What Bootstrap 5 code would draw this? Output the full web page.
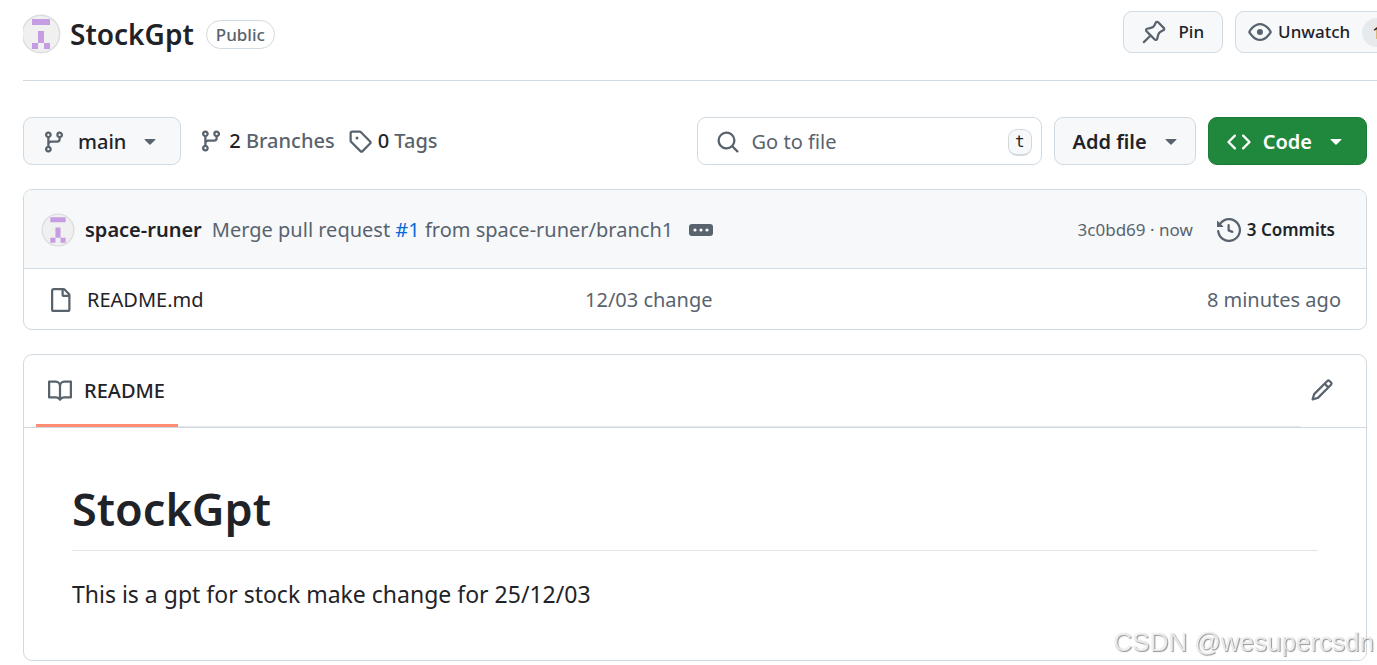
<!DOCTYPE html>
<html lang="en">
<head>
<meta charset="utf-8">
<meta name="viewport" content="width=device-width, initial-scale=1">
<title>StockGpt</title>
<link href="https://cdn.jsdelivr.net/npm/bootstrap@5.3.0/dist/css/bootstrap.min.css" rel="stylesheet">
<style>
  :root { --line: #d1d9e0; --muted: #59636e; --ink: #1f2328; --soft: #f6f8fa; }
  body { font-family: "Noto Sans", "Open Sans", sans-serif; font-size: 20px; line-height: 30px; color: var(--ink); background: #fff; overflow-x: hidden; }
  a { color: inherit; text-decoration: none; }
  .ico { width: 24px; height: 24px; fill: var(--muted); flex: none; }
  .muted { color: var(--muted); }
  .accent { color: #0969da; }
  .semi { font-weight: 600; }
  .medium { font-weight: 500; }
  .gap-icon { gap: 6px; }
  .gap-wide { gap: 12px; }
  .page { padding: 0 10px 0 23px; }
  .repo-head { height: 81px; padding-bottom: 12px; margin-right: -10px; border-bottom: 1px solid var(--line); overflow: hidden; }
  .head-actions { gap: 12px; margin: 0 -28px 4px auto; }
  .avatar-lg { width: 40px; height: 40px; margin-left: -2px; }
  .avatar-sm { width: 34px; height: 34px; }
  .repo-name { font-size: 28px; line-height: 36px; margin-left: 9px; }
  .pill { font-size: 17px; line-height: 27px; border: 1px solid var(--line); border-radius: 15px; padding: 0 9px; margin-left: 12px; }
  .btn-soft { --bs-btn-color: var(--ink); --bs-btn-bg: var(--soft); --bs-btn-border-color: var(--line); --bs-btn-hover-bg: #eff2f5; --bs-btn-hover-border-color: var(--line); --bs-btn-border-radius: 9px; font-size: 20px; line-height: 30px; padding: 0 18px; display: flex; align-items: center; gap: 12px; flex: none; }
  .btn-green { --bs-btn-color: #fff; --bs-btn-bg: #1f883d; --bs-btn-border-color: #1c7a37; --bs-btn-hover-color: #fff; --bs-btn-hover-bg: #1c8139; }
  .btn-green .ico { fill: #fff; }
  .head-btn { height: 42px; font-size: 17px; }
  .watch-btn { padding: 0 12px; gap: 6px; }
  .tool { height: 48px; padding-top: 2px; }
  .add-btn { padding-right: 12px; }
  .count { background: #e7eaed; border-radius: 15px; line-height: 29px; padding: 0 10px; margin-left: 6px; }
  .toolbar { margin-top: 36px; }
  .refs { gap: 13px; margin-left: 18px; }
  .search-box { width: 345px; border: 1px solid var(--line); border-radius: 9px; padding: 2px 9px 0 18px; gap: 12px; }
  .search-box input { font: inherit; color: var(--ink); border: 0; outline: 0; min-width: 0; padding: 0; background: transparent; }
  .search-box input::placeholder { color: var(--muted); opacity: 1; }
  .key { font: 16px/24px "DejaVu Sans Mono", monospace; color: var(--ink); background: var(--soft); border: 1px solid var(--line); border-bottom-width: 2px; border-radius: 9px; padding: 0 6px; }
  .panel { border: 1px solid var(--line); border-radius: 9px; margin-top: 24px; }
  .commit { height: 79px; padding: 1px 31px 0 17px; gap: 10px; background: var(--soft); border-bottom: 1px solid var(--line); border-radius: 8px 8px 0 0; }
  .commit-meta { font-size: 17px; gap: 24px; }
  .dots { width: 24px; height: 12px; border: 0; padding: 0; border-radius: 3px; background: var(--muted); display: flex; margin-left: 6px; }
  .dots svg { width: 24px; height: 12px; fill: #fff; }
  .files { width: 100%; table-layout: fixed; }
  .files td { height: 60px; padding: 1px 25px 0 0; vertical-align: middle; }
  .files td:first-child { width: 561px; padding-left: 24px; }
  .file-name { gap: 15px; }
  .tabs { height: 73px; padding: 0 32px 0 12px; border-bottom: 1px solid var(--line); }
  .tabline { border-bottom: 1px solid #e3e8ec; margin-right: 9px; }
  .tab-on { padding: 2px 13px 0 12px; border-bottom: 3px solid #fd8c73; margin-bottom: -1px; gap: 12px; }
  .edit-btn { padding: 0 0 2px; border: 0; display: flex; align-items: center; }
  .article { padding: 49px 48px 48px; }
  .article h1 { font-size: 45px; line-height: 64px; padding-bottom: 9px; margin: 0 0 25px; border-bottom: 1px solid #dfe4e9; }
  .article p { font-size: 23px; line-height: 36px; margin: 0; }
  .watermark { position: fixed; right: 3px; bottom: 8px; font: 26px/30px "Liberation Sans", sans-serif; color: rgba(255,255,255,.8); text-shadow: 1px 1px 1px rgba(0,0,0,.4), 0 0 1px rgba(0,0,0,.25); pointer-events: none; }
</style>
</head>
<body>
<svg class="d-none" aria-hidden="true">
  <symbol id="avatar" viewBox="0 0 40 40"><circle cx="20" cy="20" r="18.7" fill="#f0f0f0" stroke="#dcdddf" stroke-width="1.5"/><path fill="#c69ce2" d="M11 5h18v6H11zM17 17h6v12h-6zM11 29h6v6h-6zM23 29h6v6h-6z"/></symbol>
  <symbol id="branch" viewBox="0 0 16 16"><path d="M9.5 3.25a2.25 2.25 0 1 1 3 2.122V6A2.5 2.5 0 0 1 10 8.5H6a1 1 0 0 0-1 1v1.128a2.251 2.251 0 1 1-1.5 0V5.372a2.25 2.25 0 1 1 1.5 0v1.836A2.493 2.493 0 0 1 6 7h4a1 1 0 0 0 1-1v-.628A2.25 2.25 0 0 1 9.5 3.25Zm-6 0a.75.75 0 1 0 1.5 0 .75.75 0 0 0-1.5 0Zm8.25-.75a.75.75 0 1 0 0 1.5.75.75 0 0 0 0-1.5ZM4.25 12a.75.75 0 1 0 0 1.5.75.75 0 0 0 0-1.5Z"/></symbol>
  <symbol id="tag" viewBox="0 0 16 16"><path d="M1 7.775V2.75C1 1.784 1.784 1 2.75 1h5.025c.464 0 .91.184 1.238.513l6.25 6.25a1.75 1.75 0 0 1 0 2.474l-5.026 5.026a1.75 1.75 0 0 1-2.474 0l-6.25-6.25A1.752 1.752 0 0 1 1 7.775Zm1.5 0c0 .066.026.13.073.177l6.25 6.25a.25.25 0 0 0 .354 0l5.025-5.025a.25.25 0 0 0 0-.354l-6.25-6.25a.25.25 0 0 0-.177-.073H2.75a.25.25 0 0 0-.25.25ZM6 5a1 1 0 1 1 0 2 1 1 0 0 1 0-2Z"/></symbol>
  <symbol id="search" viewBox="0 0 16 16"><path d="M10.68 11.74a6 6 0 0 1-7.922-8.982 6 6 0 0 1 8.982 7.922l3.04 3.04a.749.749 0 0 1-.326 1.275.749.749 0 0 1-.734-.215ZM11.5 7a4.499 4.499 0 1 0-8.997 0A4.499 4.499 0 0 0 11.5 7Z"/></symbol>
  <symbol id="code" viewBox="0 0 16 16"><path d="m11.28 3.22 4.25 4.25a.75.75 0 0 1 0 1.06l-4.25 4.25a.749.749 0 0 1-1.275-.326.749.749 0 0 1 .215-.734L13.94 8l-3.72-3.72a.749.749 0 0 1 .326-1.275.749.749 0 0 1 .734.215Zm-6.56 0a.751.751 0 0 1 1.042.018.751.751 0 0 1 .018 1.042L2.06 8l3.72 3.72a.749.749 0 0 1-.326 1.275.749.749 0 0 1-.734-.215L.47 8.53a.75.75 0 0 1 0-1.06Z"/></symbol>
  <symbol id="caret" viewBox="0 0 16 16"><path d="m4.427 6.427 3.396 3.396a.25.25 0 0 0 .354 0l3.396-3.396A.25.25 0 0 0 11.396 6H4.604a.25.25 0 0 0-.177.427Z"/></symbol>
  <symbol id="file" viewBox="0 0 16 16"><path d="M2 1.75C2 .784 2.784 0 3.75 0h6.586c.464 0 .909.184 1.237.513l2.914 2.914c.329.328.513.773.513 1.237v9.586A1.75 1.75 0 0 1 13.25 16h-9.5A1.75 1.75 0 0 1 2 14.25Zm1.75-.25a.25.25 0 0 0-.25.25v12.5c0 .138.112.25.25.25h9.5a.25.25 0 0 0 .25-.25V6h-2.75A1.75 1.75 0 0 1 9 4.25V1.5Zm6.75.062V4.25c0 .138.112.25.25.25h2.688l-.011-.013-2.914-2.914-.013-.011Z"/></symbol>
  <symbol id="history" viewBox="0 0 16 16"><path d="m.427 1.927 1.215 1.215a8.002 8.002 0 1 1-1.6 5.685.75.75 0 1 1 1.493-.154 6.5 6.5 0 1 0 1.18-4.458l1.358 1.358A.25.25 0 0 1 3.896 6H.25A.25.25 0 0 1 0 5.75V2.104a.25.25 0 0 1 .427-.177ZM7.75 4a.75.75 0 0 1 .75.75v2.992l2.028.812a.75.75 0 0 1-.557 1.392l-2.5-1A.751.751 0 0 1 7 8.25v-3.5A.75.75 0 0 1 7.75 4Z"/></symbol>
  <symbol id="book" viewBox="0 0 16 16"><path d="M0 1.75A.75.75 0 0 1 .75 1h4.253c1.227 0 2.317.59 3 1.501A3.743 3.743 0 0 1 11.006 1h4.245a.75.75 0 0 1 .75.75v10.5a.75.75 0 0 1-.75.75h-4.507a2.25 2.25 0 0 0-1.591.659l-.622.621a.75.75 0 0 1-1.06 0l-.622-.621A2.25 2.25 0 0 0 5.258 13H.75a.75.75 0 0 1-.75-.75Zm7.251 10.324.004-5.073-.002-2.253A2.25 2.25 0 0 0 5.003 2.5H1.5v9h3.757a3.75 3.75 0 0 1 1.994.574ZM8.755 4.75l-.004 7.322a3.752 3.752 0 0 1 1.992-.572H14.5v-9h-3.495a2.25 2.25 0 0 0-2.25 2.25Z"/></symbol>
  <symbol id="pencil" viewBox="0 0 16 16"><path d="M11.013 1.427a1.75 1.75 0 0 1 2.474 0l1.086 1.086a1.75 1.75 0 0 1 0 2.474l-8.61 8.61c-.21.21-.47.364-.756.445l-3.251.93a.75.75 0 0 1-.927-.928l.929-3.25c.081-.286.235-.547.445-.758l8.61-8.61Zm.176 4.823L9.75 4.81l-6.286 6.287a.253.253 0 0 0-.064.108l-.558 1.953 1.953-.558a.253.253 0 0 0 .108-.064Zm1.238-3.763a.25.25 0 0 0-.354 0L10.811 3.75l1.439 1.44 1.263-1.263a.25.25 0 0 0 0-.354Z"/></symbol>
  <symbol id="eye" viewBox="0 0 16 16"><path d="M8 2c1.981 0 3.671.992 4.933 2.078 1.27 1.091 2.187 2.345 2.637 3.023a1.62 1.62 0 0 1 0 1.798c-.45.678-1.367 1.932-2.637 3.023C11.67 13.008 9.981 14 8 14c-1.981 0-3.671-.992-4.933-2.078C1.797 10.83.88 9.576.43 8.898a1.62 1.62 0 0 1 0-1.798c.45-.677 1.367-1.931 2.637-3.022C4.33 2.992 6.019 2 8 2ZM1.679 7.932a.12.12 0 0 0 0 .136c.411.622 1.241 1.75 2.366 2.717C5.176 11.758 6.527 12.5 8 12.5c1.473 0 2.825-.742 3.955-1.715 1.124-.967 1.954-2.096 2.366-2.717a.12.12 0 0 0 0-.136c-.412-.621-1.242-1.75-2.366-2.717C10.824 4.242 9.473 3.5 8 3.5c-1.473 0-2.825.742-3.955 1.715-1.124.967-1.954 2.096-2.366 2.717ZM8 10a2 2 0 1 1-.001-3.999A2 2 0 0 1 8 10Z"/></symbol>
  <symbol id="pin" viewBox="0 0 16 16"><path d="m11.294.984 3.722 3.722a1.75 1.75 0 0 1-.504 2.826l-1.327.613a3.089 3.089 0 0 0-1.707 2.084l-.584 2.454c-.317 1.332-1.972 1.8-2.94.832L5.75 11.311 1.78 15.28a.749.749 0 1 1-1.06-1.06l3.969-3.97-2.204-2.204c-.968-.968-.5-2.623.832-2.94l2.454-.584a3.08 3.08 0 0 0 2.084-1.707l.613-1.327a1.75 1.75 0 0 1 2.826-.504ZM6.283 9.723l2.732 2.731a.25.25 0 0 0 .42-.119l.584-2.454a4.586 4.586 0 0 1 2.537-3.098l1.328-.613a.25.25 0 0 0 .072-.404l-3.722-3.722a.25.25 0 0 0-.404.072l-.613 1.328a4.584 4.584 0 0 1-3.098 2.537l-2.454.584a.25.25 0 0 0-.119.42l2.731 2.732Z"/></symbol>
</svg>

<div class="page">
  <header class="repo-head d-flex align-items-center">
    <svg class="avatar-lg flex-shrink-0"><use href="#avatar"/></svg>
    <a href="#" class="repo-name semi">StockGpt</a>
    <span class="pill medium muted">Public</span>
    <div class="head-actions d-flex flex-shrink-0">
      <button type="button" class="btn btn-soft head-btn medium"><svg class="ico"><use href="#pin"/></svg><span>Pin</span></button>
      <button type="button" class="btn btn-soft head-btn watch-btn medium"><svg class="ico"><use href="#eye"/></svg><span>Unwatch</span><span class="count">1</span></button>
    </div>
  </header>

  <div class="toolbar d-flex align-items-center">
    <button type="button" class="btn btn-soft tool medium"><svg class="ico"><use href="#branch"/></svg><span>main</span><svg class="ico"><use href="#caret"/></svg></button>
    <nav class="refs d-flex medium" aria-label="Branches and tags">
      <a href="#" class="gap-icon d-flex align-items-center"><svg class="ico"><use href="#branch"/></svg><span>2 <span class="muted">Branches</span></span></a>
      <a href="#" class="gap-icon d-flex align-items-center"><svg class="ico"><use href="#tag"/></svg><span>0 <span class="muted">Tags</span></span></a>
    </nav>
    <div class="gap-wide d-flex ms-auto">
      <label class="search-box tool d-flex align-items-center"><svg class="ico"><use href="#search"/></svg><input type="text" class="flex-grow-1" placeholder="Go to file" aria-label="Go to file"><kbd class="key">t</kbd></label>
      <button type="button" class="btn btn-soft tool add-btn semi"><span>Add file</span><svg class="ico"><use href="#caret"/></svg></button>
      <button type="button" class="btn btn-soft btn-green tool semi"><svg class="ico"><use href="#code"/></svg><span>Code</span><svg class="ico"><use href="#caret"/></svg></button>
    </div>
  </div>

  <section class="panel">
    <div class="commit d-flex align-items-center">
      <svg class="avatar-sm flex-shrink-0"><use href="#avatar"/></svg>
      <a href="#" class="semi">space-runer</a>
      <span class="muted">Merge pull request <a href="#" class="accent">#1</a> from space-runer/branch1</span>
      <button type="button" class="dots" aria-label="Show details"><svg viewBox="0 0 24 12"><circle cx="6" cy="6" r="1.6"/><circle cx="12" cy="6" r="1.6"/><circle cx="18" cy="6" r="1.6"/></svg></button>
      <div class="commit-meta d-flex align-items-center ms-auto">
        <span class="muted">3c0bd69 · now</span>
        <a href="#" class="gap-icon semi d-flex align-items-center"><svg class="ico"><use href="#history"/></svg>3 Commits</a>
      </div>
    </div>
    <table class="files">
      <tbody><tr>
        <td><a href="#" class="file-name d-flex align-items-center"><svg class="ico"><use href="#file"/></svg>README.md</a></td>
        <td class="muted">12/03 change</td>
        <td class="muted text-end">8 minutes ago</td>
      </tr></tbody>
    </table>
  </section>

  <section class="panel">
    <div class="tabs d-flex">
      <div class="tabline d-flex flex-grow-1"><a href="#" class="tab-on d-flex align-items-center medium"><svg class="ico"><use href="#book"/></svg>README</a></div>
      <button type="button" class="btn edit-btn" aria-label="Edit file"><svg class="ico"><use href="#pencil"/></svg></button>
    </div>
    <article class="article"><h1 class="semi">StockGpt</h1><p>This is a gpt for stock make change for 25/12/03</p></article>
  </section>
</div>
<div class="watermark">CSDN @wesupercsdn</div>
<script src="https://cdn.jsdelivr.net/npm/bootstrap@5.3.0/dist/js/bootstrap.bundle.min.js"></script>
</body>
</html>
